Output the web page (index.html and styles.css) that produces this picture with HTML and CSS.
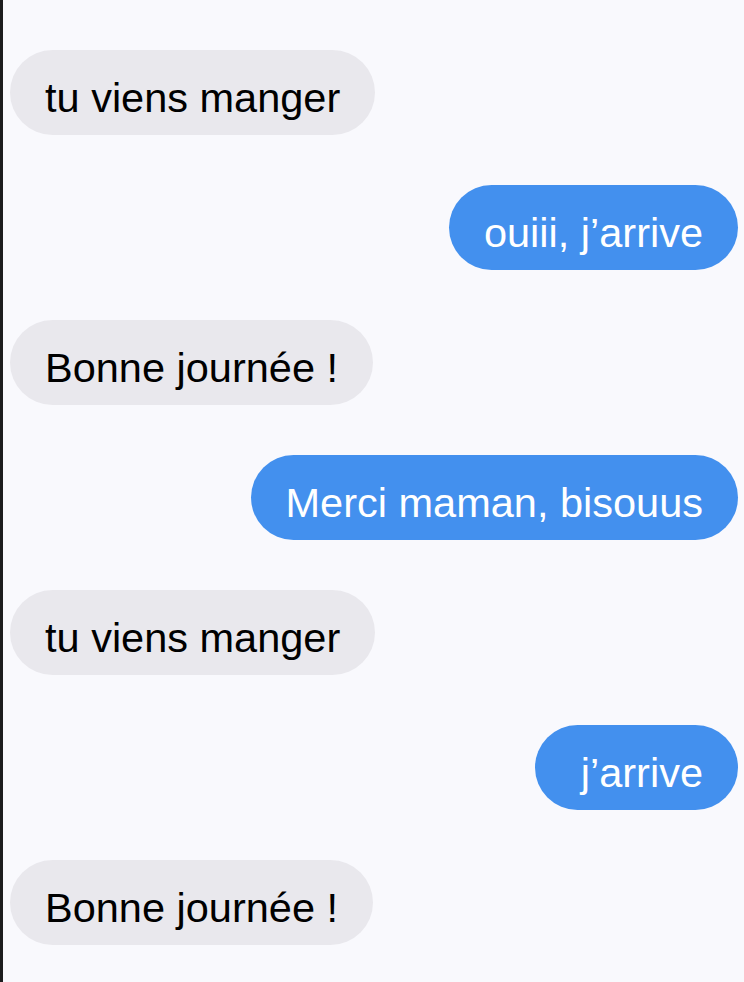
FILE: index.html
```html
<!DOCTYPE html>
<html lang="fr">
<head>
<meta charset="utf-8">
<title>Messages</title>
<link rel="stylesheet" href="styles.css">
</head>
<body>
<div class="chat">
  <div class="msg in">tu viens manger</div>
  <div class="msg out">ouiii, j’arrive</div>
  <div class="msg in">Bonne journée !</div>
  <div class="msg out">Merci maman, bisouus</div>
  <div class="msg in">tu viens manger</div>
  <div class="msg out">j’arrive</div>
  <div class="msg in">Bonne journée !</div>
</div>
</body>
</html>
```
FILE: styles.css
```css
html, body {
  margin: 0;
  padding: 0;
  background: #f9f9fd;
}
.chat {
  box-sizing: border-box;
  min-height: 982px;
  border-left: 3px solid #1c1c1e;
  padding: 50px 6px 0 7px;
  display: flex;
  flex-direction: column;
  gap: 50px;
  font-family: "Liberation Sans", Arial, sans-serif;
  font-size: 41.5px;
  line-height: 47px;
}
.msg {
  padding: 24px 35px 14px;
  border-radius: 43px;
  white-space: nowrap;
  min-width: 133px;
}
.in {
  align-self: flex-start;
  background: #e9e8ed;
  color: #000;
}
.out {
  align-self: flex-end;
  background: #4390ee;
  color: #fff;
  text-align: right;
}
```
